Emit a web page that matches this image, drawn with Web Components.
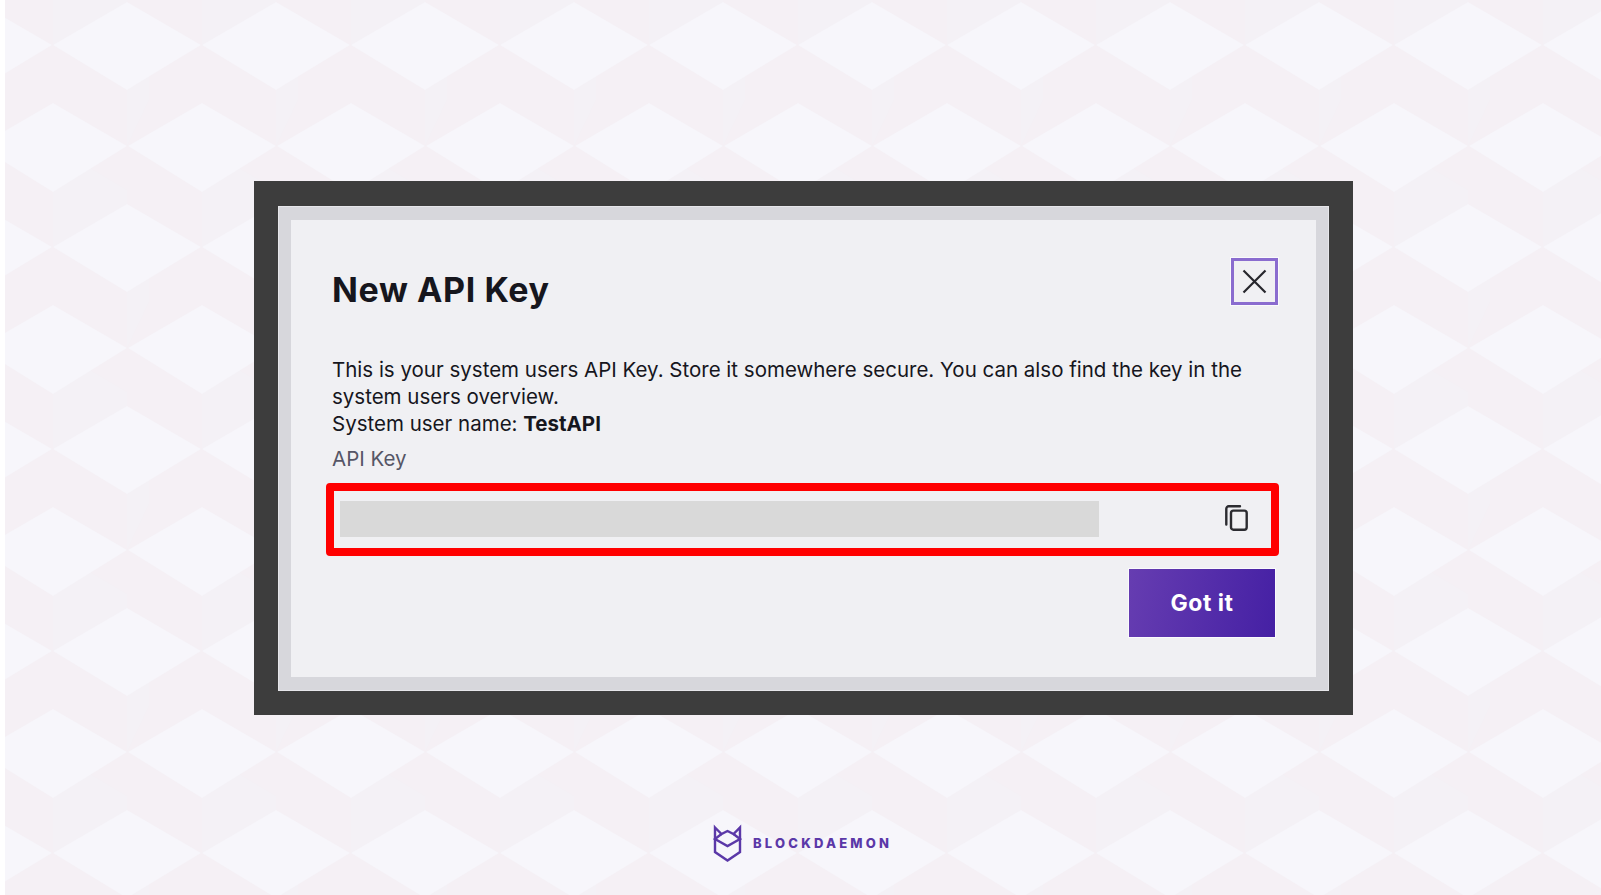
<!DOCTYPE html>
<html lang="en">
<head>
<meta charset="utf-8">
<title>New API Key</title>
<style>
  html, body { margin: 0; height: 100%; background: #fff; }
  body { font-family: "Inter", "Liberation Sans", sans-serif; }
</style>
</head>
<body>
<bd-page>
  <bd-modal heading="New API Key">
    <p>This is your system users API Key. Store it somewhere secure. You can also find the key in the system users overview.<br>System user name: <b>TestAPI</b></p>
    <bd-key-field label="API Key"></bd-key-field>
    <bd-button slot="actions">Got it</bd-button>
  </bd-modal>
  <bd-logo></bd-logo>
</bd-page>

<script>
const pageTemplate = document.createElement('template')
pageTemplate.innerHTML = `
<style>
    :host {
        display: block;
        position: relative;
        height: 895px;
        overflow: hidden;
        box-sizing: border-box;
        padding: 181px 0 0 254px;
    }
    svg {
        position: absolute;
        left: 5px;
        top: 0;
        width: 1596px;
        height: 895px;
    }
    .content {
        position: relative;
        display: flex;
        flex-direction: column;
        align-items: flex-start;
    }
</style>
<svg aria-hidden="true">
    <defs>
        <pattern id="cubes" x="-5" y="0" width="149" height="202" patternUnits="userSpaceOnUse">
            <rect width="149" height="202" fill="#f5f0f5"/>
            <g fill="#f4f1f6">
                <path d="M127 45H149V100L127 146Z"/>
                <path d="M53 146L127 190V202H53Z"/>
                <path d="M53 0H127V-12L127 88L53 44Z"/>
            </g>
            <g fill="#f7f6fb">
                <path d="M127 2L201 45L127 90L53 45Z"/>
                <path d="M-22 2L52 45L-22 90L-96 45Z"/>
                <path d="M53 103L127 146L53 192L-21 146Z"/>
                <path d="M202 103L276 146L202 192L128 146Z"/>
            </g>
        </pattern>
    </defs>
    <rect width="1596" height="895" fill="url(#cubes)"/>
</svg>
<div class="content"><slot></slot></div>
`

/**
 * The full page, draws the cube pattern behind its content.
 */
class BdPage extends HTMLElement {
  constructor () {
    super()
    this.attachShadow({ mode: 'open' })
    this.shadowRoot.appendChild(pageTemplate.content.cloneNode(true))
  }
}

const modalTemplate = document.createElement('template')
modalTemplate.innerHTML = `
<style>
    :host {
        display: block;
        box-sizing: border-box;
        width: 1099px;
        height: 534px;
        padding: 25px 24px 24px 24px;
        background: #3d3d3d;
    }
    .edge {
        box-sizing: border-box;
        height: 100%;
        padding: 13px 12px;
        background: #d7d7dc;
        border: 1px solid #e6e6ea;
    }
    .panel {
        box-sizing: border-box;
        height: 100%;
        padding: 38px 38px 0 41px;
        background: #f0f0f3;
        color: #16161d;
    }
    header {
        display: flex;
        justify-content: space-between;
        align-items: flex-start;
        height: 98px;
    }
    h1 {
        margin: 10px 0 0;
        font: 700 34px/44px "Inter", "Liberation Sans", sans-serif;
        letter-spacing: 0.6px;
    }
    .body {
        font: 400 20.5px/27.2px "Inter", "Liberation Sans", sans-serif;
        margin-right: -6px;
    }
    ::slotted(p) {
        margin: 0;
    }
    .actions {
        display: flex;
        justify-content: flex-end;
        margin-top: 13px;
        padding-right: 3px;
    }
</style>
<div class="edge">
    <div class="panel">
        <header>
            <h1></h1>
            <bd-close-button></bd-close-button>
        </header>
        <div class="body"><slot></slot></div>
        <div class="actions"><slot name="actions"></slot></div>
    </div>
</div>
`

/**
 * The dialog, with the dark frame around it.
 */
class BdModal extends HTMLElement {
  constructor () {
    super()
    this.attachShadow({ mode: 'open' })
    this.shadowRoot.appendChild(modalTemplate.content.cloneNode(true))
  }

  connectedCallback () {
    this.shadowRoot.querySelector('h1').textContent = this.getAttribute('heading')
  }
}

const closeTemplate = document.createElement('template')
closeTemplate.innerHTML = `
<style>
    :host {
        display: block;
        box-sizing: border-box;
        width: 47px;
        height: 47px;
        border: 3px solid #8a6ccf;
        outline: 1px solid #fafafc;
        background: #f0f0f3;
    }
    svg {
        display: block;
        width: 41px;
        height: 41px;
        fill: none;
        stroke: #26262c;
        stroke-width: 2.2;
    }
</style>
<svg viewBox="0 0 41 41"><path d="M9.5 9.5L31.5 31.5M31.5 9.5L9.5 31.5"/></svg>
`

/**
 * Square close button with a focus border.
 */
class BdCloseButton extends HTMLElement {
  constructor () {
    super()
    this.attachShadow({ mode: 'open' })
    this.shadowRoot.appendChild(closeTemplate.content.cloneNode(true))
  }
}

const keyFieldTemplate = document.createElement('template')
keyFieldTemplate.innerHTML = `
<style>
    :host {
        display: block;
    }
    label {
        display: block;
        margin: 7px 0 11px;
        color: #565666;
        font-size: 20.5px;
        line-height: 27px;
    }
    .box {
        display: flex;
        align-items: center;
        justify-content: space-between;
        box-sizing: border-box;
        width: 953px;
        height: 73px;
        margin-left: -6px;
        padding: 0 23px 0 6px;
        border: 8px solid #ff0000;
        border-radius: 4px;
    }
    .mask {
        width: 759px;
        height: 36px;
        background: #d9d9d9;
    }
    svg {
        display: block;
        width: 23px;
        height: 26px;
        margin-bottom: 2px;
        fill: none;
        stroke: #2b2b30;
        stroke-width: 2.4;
        stroke-linejoin: round;
        stroke-linecap: round;
    }
</style>
<label></label>
<div class="box">
    <div class="mask"></div>
    <svg viewBox="0 0 23 26"><path d="M15 1.3H3.7A2.4 2.4 0 0 0 1.3 3.7V19.5"/><rect x="6" y="5.6" width="15.7" height="19.1" rx="2.4"/></svg>
</div>
`

/**
 * Read only field for the key, the value is masked in this picture.
 */
class BdKeyField extends HTMLElement {
  constructor () {
    super()
    this.attachShadow({ mode: 'open' })
    this.shadowRoot.appendChild(keyFieldTemplate.content.cloneNode(true))
  }

  connectedCallback () {
    this.shadowRoot.querySelector('label').textContent = this.getAttribute('label')
  }
}

const buttonTemplate = document.createElement('template')
buttonTemplate.innerHTML = `
<style>
    :host {
        display: flex;
        align-items: center;
        justify-content: center;
        box-sizing: border-box;
        width: 146px;
        height: 68px;
        background: linear-gradient(100deg, #663db1, #4520a4);
        outline: 1px solid #fafafc;
        color: #fff;
        font: 700 23px "Inter", "Liberation Sans", sans-serif;
        letter-spacing: 0.5px;
    }
</style>
<slot></slot>
`

/**
 * Primary button with the purple gradient.
 */
class BdButton extends HTMLElement {
  constructor () {
    super()
    this.attachShadow({ mode: 'open' })
    this.shadowRoot.appendChild(buttonTemplate.content.cloneNode(true))
  }
}

const logoTemplate = document.createElement('template')
logoTemplate.innerHTML = `
<style>
    :host {
        display: flex;
        align-items: center;
        gap: 11px;
        margin: 109px 0 0 459px;
        color: #5b38a8;
        font: 800 13px "Inter", "Liberation Sans", sans-serif;
        letter-spacing: 3.2px;
    }
    svg {
        display: block;
        width: 29px;
        height: 38px;
        fill: none;
        stroke: #5b38a8;
        stroke-width: 2.4;
        stroke-linejoin: miter;
    }
</style>
<svg viewBox="0 0 29 38">
    <path d="M2 3.5L8.5 10L14.5 7L20.5 10L27 3.5V28L14.5 36.5L2 28Z"/>
    <path d="M8.5 10L2 15L14.5 22L27 15L20.5 10"/>
</svg>
<span>BLOCKDAEMON</span>
`

/**
 * Company logo, cat shaped mark and word.
 */
class BdLogo extends HTMLElement {
  constructor () {
    super()
    this.attachShadow({ mode: 'open' })
    this.shadowRoot.appendChild(logoTemplate.content.cloneNode(true))
  }
}

customElements.define('bd-page', BdPage)
customElements.define('bd-modal', BdModal)
customElements.define('bd-close-button', BdCloseButton)
customElements.define('bd-key-field', BdKeyField)
customElements.define('bd-button', BdButton)
customElements.define('bd-logo', BdLogo)
</script>
</body>
</html>
